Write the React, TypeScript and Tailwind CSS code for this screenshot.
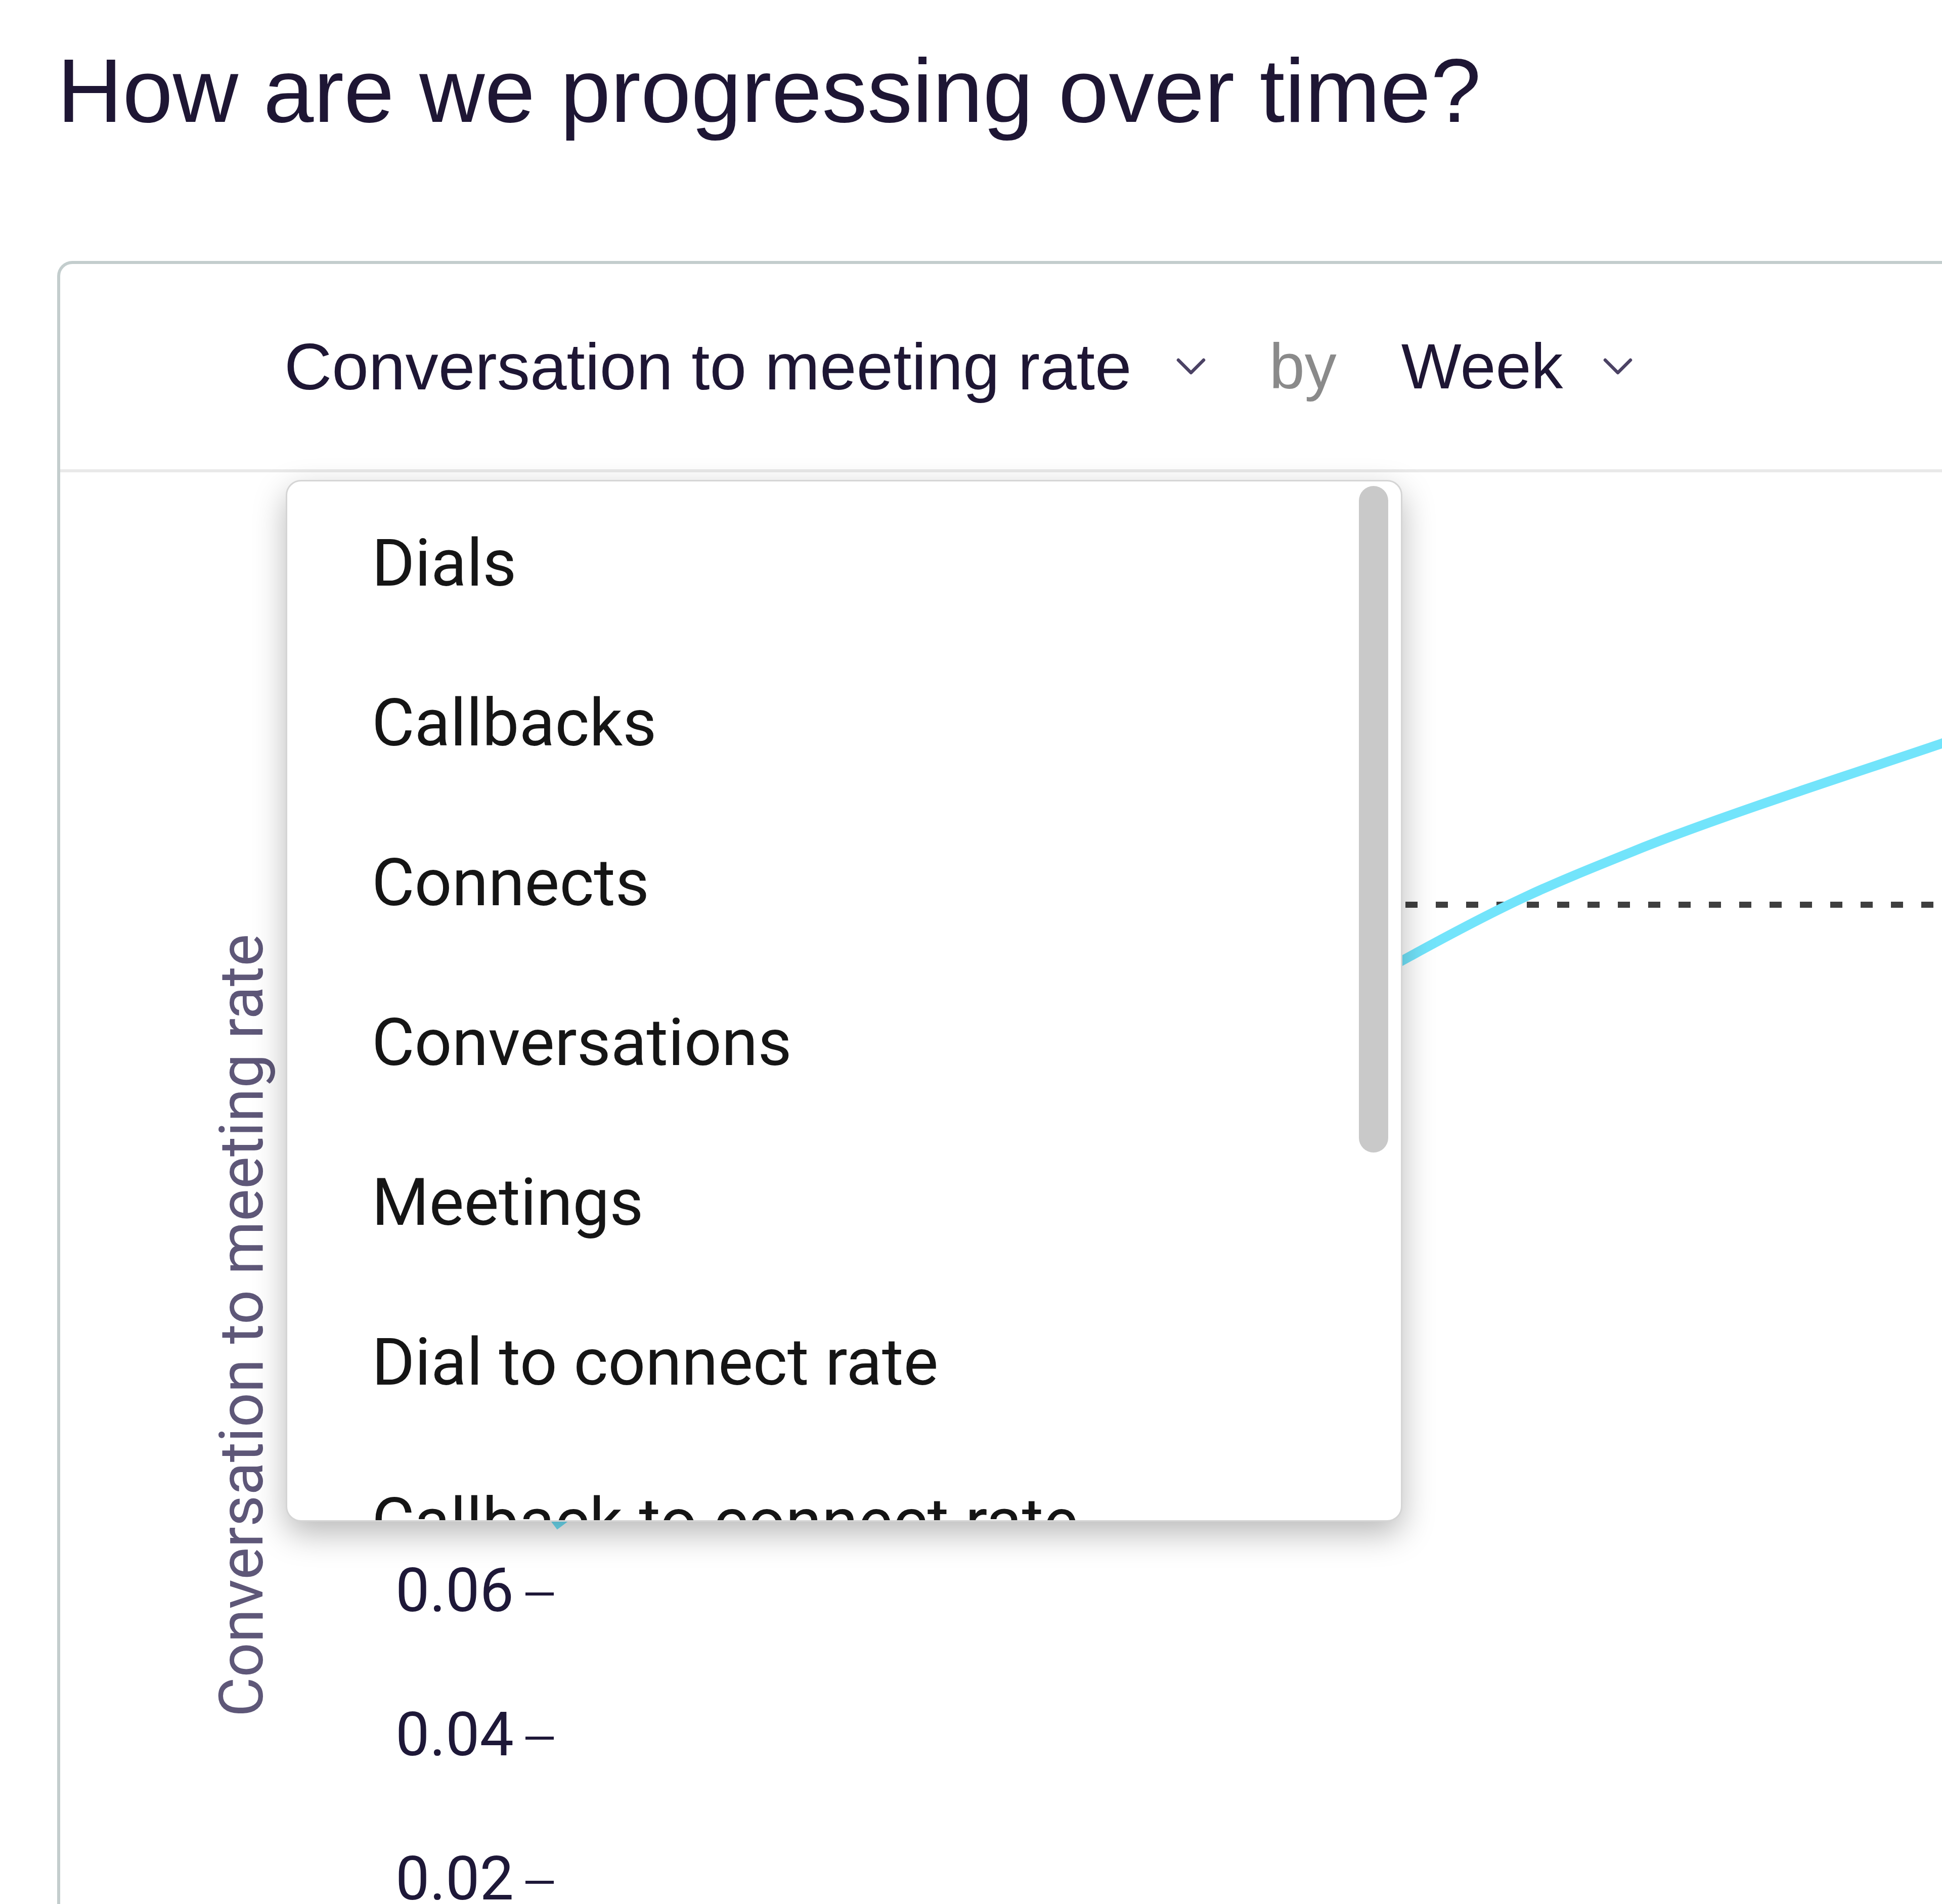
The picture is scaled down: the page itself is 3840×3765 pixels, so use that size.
import React from 'react';

const metrics = [
  'Dials',
  'Callbacks',
  'Connects',
  'Conversations',
  'Meetings',
  'Dial to connect rate',
  'Callback to connect rate',
  'Connect to conversation rate',
  'Conversation to meeting rate',
];

// points of the trend line, in chart coordinates
const trend: [number, number][] = [
  [977, 2083],
  [1781, 1482],
  [2651, 967],
  [3114, 748],
  [3721, 536],
  [3900, 478],
];

function smoothPath(pts: [number, number][]) {
  let d = `M ${pts[0][0]} ${pts[0][1]}`;
  for (let i = 0; i < pts.length - 1; i++) {
    const p0 = pts[i - 1] || pts[i];
    const p1 = pts[i];
    const p2 = pts[i + 1];
    const p3 = pts[i + 2] || p2;
    const c1x = p1[0] + (p2[0] - p0[0]) / 6;
    const c1y = p1[1] + (p2[1] - p0[1]) / 6;
    const c2x = p2[0] - (p3[0] - p1[0]) / 6;
    const c2y = p2[1] - (p3[1] - p1[1]) / 6;
    d += ` C ${c1x} ${c1y}, ${c2x} ${c2y}, ${p2[0]} ${p2[1]}`;
  }
  return d;
}

function Chevron() {
  return (
    <svg width="60" height="36" viewBox="0 0 60 36" fill="none" className="shrink-0">
      <polyline points="5,5 30,30 55,5" stroke="#4b4264" strokeWidth="6.5" strokeLinecap="round" strokeLinejoin="round" />
    </svg>
  );
}

const ticks = [
  { label: '0.06', y: 2218 },
  { label: '0.04', y: 2503 },
  { label: '0.02', y: 2788 },
];

export default function App() {
  return (
    <div className="w-[3840px] h-[3765px] overflow-hidden bg-white pl-[113px] pt-[90px]">
      {/* Titulo */}
      <h1 className="font-['Liberation_Sans',Arial,sans-serif] text-[179px] leading-none text-[#1e1634] whitespace-nowrap">
        How are we progressing over time?
      </h1>

      {/* Tarjeta */}
      <div className="mt-[247px] w-[3900px] h-[3400px] border-[6px] border-[#c3cdcd] rounded-[30px] bg-white">
        <div className="flex items-center h-[412px] pl-[443px] border-b-[6px] border-[#e9e9e9] font-['Liberation_Sans',Arial,sans-serif] text-[126px] leading-none text-[#1e1634] whitespace-nowrap">
          <span className="text-[130.5px]">Conversation to meeting rate</span>
          <span className="ml-[87px]"><Chevron /></span>
          <span className="ml-[125px] text-[#8a8a8a]">by</span>
          <span className="ml-[128px]">Week</span>
          <span className="ml-[78px]"><Chevron /></span>
        </div>

        <div className="relative">
          <svg width="3780" height="2900" className="block font-['Roboto',sans-serif]">
            <text
              transform="translate(400,1687) rotate(-90)"
              textAnchor="middle"
              fontSize="120.5"
              fill="#5e5778"
            >
              Conversation to meeting rate
            </text>
            {ticks.map((t) => (
              <g key={t.label}>
                <text x="897" y={t.y + 34} textAnchor="end" fontSize="120" fill="#1e1838">
                  {t.label}
                </text>
                <line x1="920" x2="976" y1={t.y} y2={t.y} stroke="#1e1838" strokeWidth="6" />
              </g>
            ))}
            <line x1="980" x2="3780" y1="855" y2="855" stroke="#3f3f3f" strokeWidth="12" strokeDasharray="24 36" />
            <path d={smoothPath(trend)} fill="none" stroke="#72e4fb" strokeWidth="19" />
          </svg>

          {/* Menu desplegable */}
          <div className="absolute left-[446px] top-[15px] w-[2208px] h-[2060px] bg-white border-[3px] border-[#d5d5d5] rounded-[30px] overflow-hidden shadow-[0_24px_64px_rgba(0,0,0,0.28)]">
            <ul className="pt-[4px] font-['Roboto',sans-serif] text-[130px] leading-none text-[#151515]">
              {metrics.map((m) => (
                <li key={m} className="flex items-center h-[316px] pl-[167px] whitespace-nowrap">
                  {m}
                </li>
              ))}
            </ul>
            <div className="absolute right-[25px] top-[9px] w-[58px] h-[1318px] rounded-full bg-[#c9c9c9]" />
          </div>
        </div>
      </div>
    </div>
  );
}
